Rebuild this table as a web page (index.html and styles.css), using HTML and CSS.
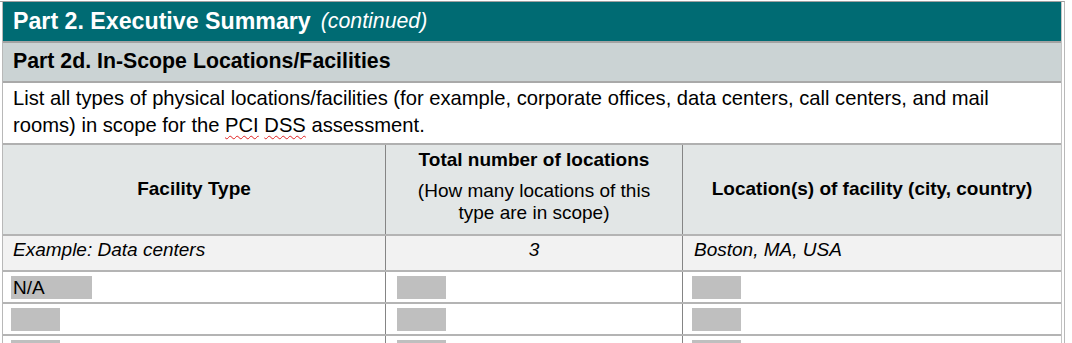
FILE: index.html
```html
<!DOCTYPE html>
<html lang="en">
<head>
<meta charset="utf-8">
<title>Part 2d. In-Scope Locations/Facilities</title>
<link rel="stylesheet" href="styles.css">
</head>
<body>
<div class="page">
  <div class="frame">
    <div class="title">Part 2. Executive Summary<span class="cont">(continued)</span></div>
    <div class="sub">Part 2d. In-Scope Locations/Facilities</div>
    <div class="desc">List all types of physical locations/facilities (for example, corporate offices, data centers, call centers, and mail rooms) in scope for the <span class="sp">PCI</span> <span class="sp">DSS</span> assessment.</div>
    <div class="row head">
      <div class="cell c1"><b>Facility Type</b></div>
      <div class="cell c2">
        <div class="hstack">
          <b>Total number of locations</b>
          <span class="hnote">(How many locations of this type are in scope)</span>
        </div>
      </div>
      <div class="cell c3"><b>Location(s) of facility (city, country)</b></div>
    </div>
    <div class="row example">
      <div class="cell c1">Example: Data centers</div>
      <div class="cell c2 num">3</div>
      <div class="cell c3">Boston, MA, USA</div>
    </div>
    <div class="row data">
      <div class="cell c1"><span class="field wide">N/A</span></div>
      <div class="cell c2"><span class="field"></span></div>
      <div class="cell c3"><span class="field"></span></div>
    </div>
    <div class="row data">
      <div class="cell c1"><span class="field"></span></div>
      <div class="cell c2"><span class="field"></span></div>
      <div class="cell c3"><span class="field"></span></div>
    </div>
    <div class="row data">
      <div class="cell c1"><span class="field"></span></div>
      <div class="cell c2"><span class="field"></span></div>
      <div class="cell c3"><span class="field"></span></div>
    </div>
  </div>
</div>
</body>
</html>
```
FILE: styles.css
```css
html, body {
  margin: 0;
  padding: 0;
  background: #ffffff;
}
body {
  font-family: "Liberation Sans", Arial, sans-serif;
  color: #000000;
  overflow: hidden;
  height: 343px;
}
.page {
  width: 1065px;
  height: 342px;
  margin-top: 1px;
  padding-right: 2px;
  border-top: 1px solid #a0a0a0;
  border-right: 1px solid #b8b8b8;
  box-sizing: border-box;
  overflow: hidden;
}
.frame {
  margin-left: 2px;
  border-left: 1px solid #b8b8b8;
  border-right: 1px solid #c4c4c4;
}
.title {
  height: 41px;
  box-sizing: border-box;
  background: #006b73;
  color: #ffffff;
  font-weight: bold;
  font-size: 23.2px;
  display: flex;
  align-items: center;
  padding-left: 10px;
  border-bottom: 2px solid #a3a3a3;
}
.title .cont {
  font-style: italic;
  font-weight: normal;
  font-size: 21.3px;
  margin-left: 10px;
}
.sub {
  background: #cbd3d4;
  font-weight: bold;
  font-size: 21.3px;
  display: flex;
  align-items: center;
  padding-left: 10px;
  padding-bottom: 2px;
  box-sizing: border-box;
  border-bottom: 2px solid #a9a9a9;
  height: 40px;
}
.desc {
  font-size: 20.2px;
  line-height: 27px;
  padding: 2px 40px 4px 10px;
  box-sizing: border-box;
  border-bottom: 2px solid #b0b0b0;
  height: 62px;
}
.sp {
  text-decoration: underline wavy #e02020;
  text-decoration-thickness: 1px;
  text-underline-offset: 3px;
}
.row {
  display: grid;
  grid-template-columns: 382px 297px 1fr;
  border-bottom: 2px solid #b4b4b4;
  font-size: 19px;
}
.cell.c2, .cell.c3 {
  border-left: 1px solid #858585;
}
.head {
  height: 91px;
  box-sizing: border-box;
  background: #e2e6e6;
  line-height: 22px;
}
.head .cell {
  display: flex;
  align-items: center;
  justify-content: center;
  text-align: center;
  padding-bottom: 2px;
}
.hstack {
  display: flex;
  flex-direction: column;
  align-items: center;
  gap: 9px;
  padding-bottom: 4px;
}
.hnote {
  width: 240px;
}
.example {
  height: 36px;
  box-sizing: border-box;
  background: #f2f2f2;
  font-style: italic;
  line-height: 22px;
}
.example .cell {
  padding: 3px 10px 0 10px;
}
.example .c3 {
  padding-left: 11px;
}
.example .num {
  text-align: center;
  padding-left: 0;
  padding-right: 0;
}
.data {
  height: 32px;
  box-sizing: border-box;
}
.data .cell {
  padding-top: 4px;
}
.data .c1 { padding-left: 8px; }
.data .c2 { padding-left: 11px; }
.data .c3 { padding-left: 9px; }
.field {
  display: block;
  width: 49px;
  height: 23px;
  background: #bfbfbf;
  font-size: 19px;
  line-height: 23px;
  padding-left: 2px;
  box-sizing: border-box;
}
.field.wide {
  width: 81px;
}
```
